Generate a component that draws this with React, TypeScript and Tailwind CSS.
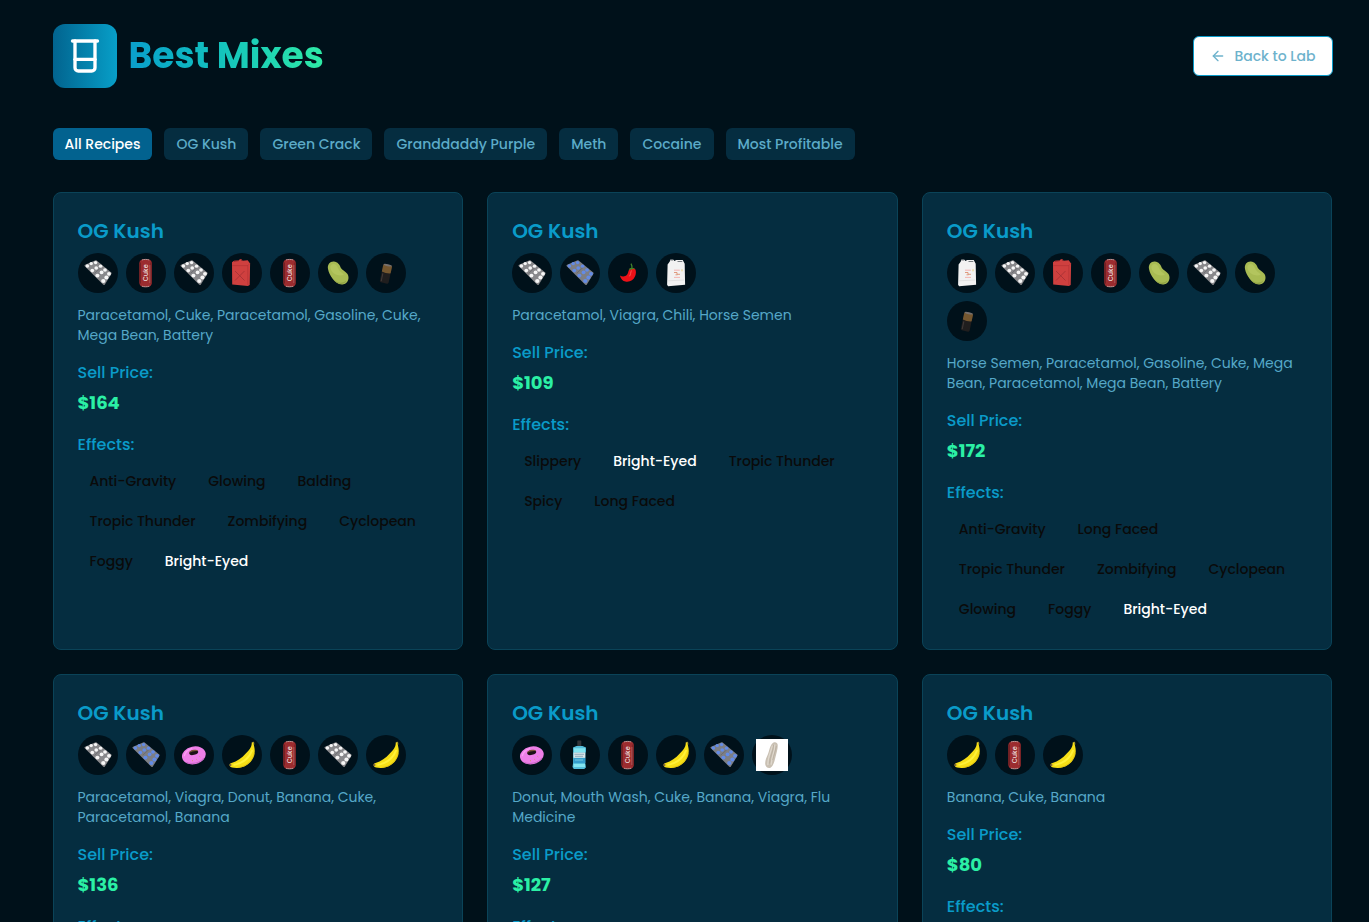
import { ArrowLeft, Beaker } from "lucide-react";

type Item =
  | "Paracetamol"
  | "Viagra"
  | "Cuke"
  | "Gasoline"
  | "Mega Bean"
  | "Battery"
  | "Chili"
  | "Horse Semen"
  | "Donut"
  | "Banana"
  | "Mouth Wash"
  | "Flu Medicine";

interface Recipe {
  name: string;
  items: Item[];
  price: number;
  effects: string[];
}

const recipes: Recipe[] = [
  {
    name: "OG Kush",
    items: ["Paracetamol", "Cuke", "Paracetamol", "Gasoline", "Cuke", "Mega Bean", "Battery"],
    price: 164,
    effects: ["Anti-Gravity", "Glowing", "Balding", "Tropic Thunder", "Zombifying", "Cyclopean", "Foggy", "Bright-Eyed"],
  },
  {
    name: "OG Kush",
    items: ["Paracetamol", "Viagra", "Chili", "Horse Semen"],
    price: 109,
    effects: ["Slippery", "Bright-Eyed", "Tropic Thunder", "Spicy", "Long Faced"],
  },
  {
    name: "OG Kush",
    items: ["Horse Semen", "Paracetamol", "Gasoline", "Cuke", "Mega Bean", "Paracetamol", "Mega Bean", "Battery"],
    price: 172,
    effects: ["Anti-Gravity", "Long Faced", "Tropic Thunder", "Zombifying", "Cyclopean", "Glowing", "Foggy", "Bright-Eyed"],
  },
  {
    name: "OG Kush",
    items: ["Paracetamol", "Viagra", "Donut", "Banana", "Cuke", "Paracetamol", "Banana"],
    price: 136,
    effects: [],
  },
  {
    name: "OG Kush",
    items: ["Donut", "Mouth Wash", "Cuke", "Banana", "Viagra", "Flu Medicine"],
    price: 127,
    effects: [],
  },
  {
    name: "OG Kush",
    items: ["Banana", "Cuke", "Banana"],
    price: 80,
    effects: [],
  },
];

const filters = ["All Recipes", "OG Kush", "Green Crack", "Granddaddy Purple", "Meth", "Cocaine", "Most Profitable"];

const pills = [
  [9.4, 13],
  [14.3, 17.6],
  [19.4, 22.6],
  [25.3, 28],
  [13.2, 10.6],
  [18.2, 15],
  [23.6, 19.4],
  [28.4, 24.4],
  [17.6, 9.6],
  [22.6, 13.2],
  [27, 17],
  [31, 20.8],
];

function Blister({ dot, foil }: { dot: string; foil: string }) {
  return (
    <>
      <path d="M7.500 12.600 18 8.300 32.600 20.300 26 31Z" fill={foil} stroke={foil} strokeWidth="2" strokeLinejoin="round" />
      <path d="m16.600 20.300 8-7.300" stroke="#5f5f64" strokeWidth=".6" />
      {pills.map(([x, y], i) => (
        <ellipse key={i} cx={x} cy={y} rx={1.5 + y * 0.023} ry={1.25 + y * 0.03} fill={dot} />
      ))}
    </>
  );
}

function ItemArt({ item }: { item: Item }) {
  switch (item) {
    case "Paracetamol":
      return <Blister dot="#f6f6f6" foil="#88888b" />;
    case "Viagra":
      return <Blister dot="#638be6" foil="#7d7f85" />;
    case "Cuke":
      return (
        <>
          <rect x="13.300" y="6.300" width="12.600" height="27.600" rx="4.200" fill="#9c2c2f" />
          <path d="M14.300 9.500v21M25 9.500v21" stroke="#702023" strokeWidth="1.200" />
          <path d="M16 7c1.800-.8 5.400-.8 7.200 0M16 33.200c1.800.8 5.400.8 7.200 0" stroke="#b99594" strokeWidth="1" fill="none" />
          <path d="M23.900 12v18" stroke="#c98d8c" strokeWidth=".5" />
          <text
            transform="translate(21.900 28.300) rotate(-90)"
            fill="#eadcdc"
            fontSize="7.500"
            textLength="17"
            lengthAdjust="spacingAndGlyphs"
            className="font-['Poppins',sans-serif] font-medium"
          >
            Cuke
          </text>
        </>
      );
    case "Gasoline":
      return (
        <>
          <path d="m10 9.300 2-1.500 4.500-.4 1.600-1.300 1.800.5.600 1.200 5.200-.6 2.400 3.200-.4 21.600-1.800 1-15.700-1.400Z" fill="#cf403f" />
          <path d="M10.200 12.600h15.600v19.500M25.800 12.600l2-2" fill="none" stroke="#b03032" strokeWidth=".6" />
          <path d="m13 18 9.500 9.500M22.500 18 13 27.500" stroke="#a13033" strokeWidth=".8" />
          <path d="m12 8.300 4.800-.7M18.700 6.500l1.200 1.200" stroke="#7e2224" strokeWidth=".8" />
        </>
      );
    case "Mega Bean":
      return (
        <>
          <path d="M10 16C9.200 11.500 12 8.400 15.800 8.600c4 .2 5.800 3.400 7.100 6.300 1.400 2.600 4.500 3 6.600 6 2.200 3.600.8 9-4 10.300-4.300 1-8.300-1.800-10.700-5.200-2.500-3.500-4.200-6.600-4.800-10Z" fill="#a8bb53" />
          <path d="M12.400 15c-.4-2.600 1.300-4.300 3.400-4.100 3 .3 4 3.700 5.200 6.100 1.300 2.300 3.800 2.700 4.900 4.700-3.600 1.700-11.500.8-13.500-6.700Z" fill="#b3c55e" />
          <path d="M15.500 26.200c3.200 3.600 8.700 5 12.700 1.300-1.300 4.600-8.500 5-12.700-1.300Z" fill="#91a245" />
        </>
      );
    case "Battery":
      return (
        <g transform="rotate(12 20 20)">
          <rect x="15.600" y="11.600" width="9" height="18.600" rx="1.400" fill="#201e1e" />
          <path d="M15.600 12.400q4.500-2 9 0v7q-4.500 1.200-9 0Z" fill="#75572f" />
          <ellipse cx="20.100" cy="12" rx="4.300" ry="1" fill="#77706d" />
          <path d="M17 21v8" stroke="#403a39" strokeWidth="1" />
        </g>
      );
    case "Chili":
      return (
        <>
          <path d="M21.300 16.400c1.500-2 4.500-1.800 5.800-.3 1.200 1.700 1 4.800.1 7-1.700 4.200-5.500 6.300-9.800 5.500-2.500-.6-4.700-2.700-5.500-6.200 2.300 1.500 5.500 1.300 7.100-.6 1.500-1.800 1-3.700 2.300-5.400Z" fill="#ed1118" />
          <path d="M23.500 17.500c-1 1.700-.6 4-2 5.800" stroke="#ff5a56" strokeWidth=".9" fill="none" />
          <path d="M20.700 16.600c1-2.400 4.800-2.700 6.600-.4l-2.600-.2-1.800.7Z" fill="#3d8a25" />
          <path d="M23.800 15c.5-1.800 0-3-.8-4.400" stroke="#42882d" strokeWidth="1.200" fill="none" />
        </>
      );
    case "Horse Semen":
      return (
        <>
          <path d="m11.600 11.500 2.200-3 .4-1.800h3.300l.8 1.200 2-.8h6.400l2 3.700.4 21-17 1.500-1-1.600Z" fill="#f2f2f2" />
          <path d="M14.300 7h2.800M21.500 8.500h4.800" stroke="#777c80" strokeWidth="1" />
          <path d="M12.200 27.800 28.500 27" stroke="#dadada" strokeWidth=".7" />
          <path d="M18 17.200h5.800M18 24.400h6" stroke="#f4aeac" strokeWidth=".9" />
          <path d="M18 19.500h3v1.800h3M19.500 21.800h2" stroke="#dc9070" strokeWidth=".9" fill="none" />
          <path d="M26 16.300v2" stroke="#e5c653" strokeWidth=".8" />
        </>
      );
    case "Donut":
      return (
        <g transform="rotate(-12 20 20)">
          <ellipse cx="19.800" cy="20.300" rx="12" ry="8.900" fill="#ee7fe8" />
          <ellipse cx="20.200" cy="17.500" rx="4.600" ry="2.400" fill="#1c1216" />
          <path d="M15.600 17.300c.7-3.200 8.500-3.200 9.200 0-2.300-1.300-6.900-1.300-9.200 0Z" fill="#7c5338" />
          <path d="M10.500 18.500c1.500-3 4.500-5 8.500-5.300" stroke="#fb9ff5" strokeWidth="1.300" fill="none" strokeLinecap="round" />
          <path d="M11 25.500c4 3.600 13.500 3.700 18-.6" stroke="#cd68c9" strokeWidth="1" fill="none" />
          <path d="m17 25 .8.600m3.700-.9.600.8m3-3 .6.700" stroke="#c99b4c" strokeWidth=".8" />
        </g>
      );
    case "Banana":
      return (
        <>
          <path
            d="M29.800 7.400 31.500 7C31.700 11 33 13 32.700 17 32 27 23 33.300 14.500 33 11 32.800 8.500 32.500 7.800 31 7.200 29.500 8 28.500 9.500 28 15 26.500 20 23 23.500 18.800 27 15 29.800 12.500 29.800 7.400Z"
            fill="#f6df16"
          />
          <path d="M30.300 15c-3 8-10.300 13.500-18.800 15" stroke="#fff03a" strokeWidth="2" fill="none" />
          <path d="M32.200 18c-.9 7.900-8.700 14.100-16.500 14.500" stroke="#d9b60e" strokeWidth=".7" fill="none" />
          <path d="M8.500 28.800v2.200" stroke="#8b6841" strokeWidth="1.600" />
          <path d="m29.900 7.600 1.700-.4.300 2.300" stroke="#b4a02b" strokeWidth=".9" fill="none" />
        </>
      );
    case "Mouth Wash":
      return (
        <>
          <rect x="17.300" y="5.500" width="4" height="6" rx=".6" fill="#30353a" />
          <path d="M13 12.500 16.500 11h6l3.500 1.500v4l-.7 2v10l.6 4-1.700 1.400H13.800L12.500 32l.6-4v-10Z" fill="#54bedc" />
          <path d="M14 13.200h11v4H14ZM13.600 29h11.500v3H13.600Z" fill="#83e5f1" />
          <path d="M13.500 17.500h11.800v5.300H13.500Z" fill="#d8e5e9" />
          <path d="M14.500 19.300h9.500m-9 2h8" stroke="#7c9bb0" strokeWidth=".8" />
          <path d="M13.500 23h11.800v5H13.500Z" fill="#359dcc" />
          <path d="M15 25h8" stroke="#85d5e9" strokeWidth=".8" />
        </>
      );
    case "Flu Medicine":
      return (
        <>
          <path d="M4 4h32v32H4Z" fill="#fff" />
          <path d="M21.500 7.500c2-1 4 .2 4.200 2.200.3 4-1.200 8.200-2.500 13.500-.9 4-2.200 8-4.700 9.600-2.300 1-5-.8-5.200-3.200-.5-3.600 1-6.600 2.500-10 1.800-4.500 2-9.800 5.700-12.100Z" fill="#c9c0b3" />
          <path d="M20.500 10.500c-1.800 6.800-5 12-4.600 19.600M22.800 9.500c.3 6.400-3.300 11.400-3.600 20.300" stroke="#dfd8cd" strokeWidth="1.300" fill="none" />
          <path d="M21.500 10c-.2 6.600-3.600 11.500-4 18.500M24.300 11c-.7 5.500-2.800 8.800-3.600 14" stroke="#b0a697" strokeWidth=".6" fill="none" />
        </>
      );
  }
}

function RecipeCard({ recipe }: { recipe: Recipe }) {
  return (
    <article className="min-h-[458px] rounded-lg border border-[#0a4358] bg-[#052d40] p-6">
      <h2 className="text-xl font-semibold text-[#0a9bc9]">{recipe.name}</h2>
      <div className="mt-2 flex flex-wrap gap-2">
        {recipe.items.map((item, i) => (
          <div key={i} className="size-10 rounded-full bg-[#00111a]">
            <svg viewBox="0 0 40 40" className="size-10" role="img" aria-label={item}>
              <ItemArt item={item} />
            </svg>
          </div>
        ))}
      </div>
      <p className="mt-3 text-sm text-[#55a8c8]">{recipe.items.join(", ")}</p>
      <h3 className="mt-4 font-medium text-[#0a9bc9]">Sell Price:</h3>
      <p className="mt-1 text-lg font-bold text-[#2bf0a5]">${recipe.price}</p>
      <h3 className="mt-4 font-medium text-[#0a9bc9]">Effects:</h3>
      <div className="mt-2 flex flex-wrap gap-2">
        {recipe.effects.map((effect) => (
          <span
            key={effect}
            className={`px-3 py-1.5 text-sm font-medium ${effect === "Bright-Eyed" ? "text-white" : "text-[#0a0a0a]"}`}
          >
            {effect}
          </span>
        ))}
      </div>
    </article>
  );
}

export default function App() {
  return (
    <div className="h-[922px] overflow-hidden bg-[#00111a] pt-6 pl-[52.5px] font-['Poppins','Inter',sans-serif]">
      <div className="w-[1280px]">
        <header className="flex items-center justify-between">
          <div className="flex items-center gap-3">
            <div className="flex size-16 items-center justify-center rounded-xl bg-linear-to-r from-[#02648f] to-[#089fc8] text-white">
              <Beaker size={40} />
            </div>
            <h1 className="bg-linear-to-r from-[#0b9ecb] to-[#2eeba5] bg-clip-text text-4xl leading-[48px] font-bold text-transparent">
              Best Mixes
            </h1>
          </div>
          <button className="flex h-10 items-center gap-2 rounded-md border border-[#0a9bc9] bg-white px-4 text-sm font-medium text-[#6db2cc]">
            <ArrowLeft size={16} />
            Back to Lab
          </button>
        </header>

        <nav className="mt-10 flex gap-3">
          {filters.map((label, i) => (
            <button
              key={label}
              className={`rounded-md px-3 py-1.5 text-sm font-medium ${
                i === 0 ? "bg-[#02628f] text-white" : "bg-[#052d40] text-[#5cabc8]"
              }`}
            >
              {label}
            </button>
          ))}
        </nav>

        <main className="mt-8 grid grid-cols-3 gap-6">
          {recipes.map((recipe, i) => (
            <RecipeCard key={i} recipe={recipe} />
          ))}
        </main>
      </div>
    </div>
  );
}
